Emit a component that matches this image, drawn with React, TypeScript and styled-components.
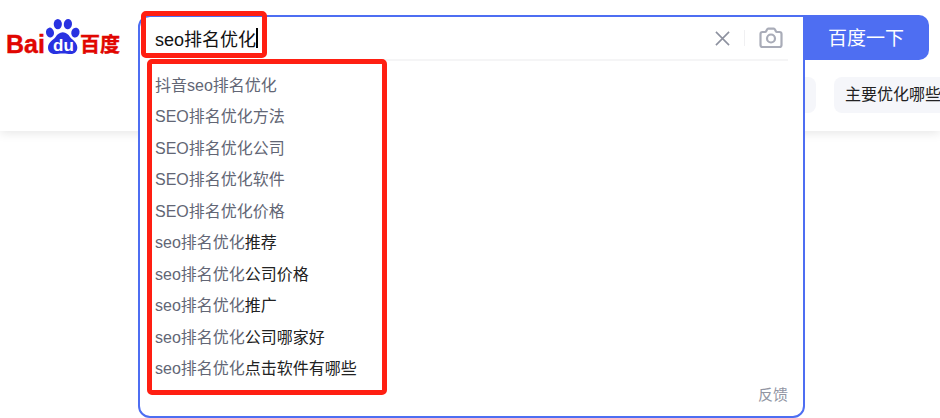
import React, { useState } from "react";
import styled, { createGlobalStyle } from "styled-components";

const blue = "#4e6ef2";

const GlobalStyle = createGlobalStyle`
  * { box-sizing: border-box; }
  body {
    margin: 0;
    background: #fff;
    font-family: "Liberation Sans", "Noto Sans CJK SC", sans-serif;
    font-size: 16px;
    color: #222;
  }
  button, input { font: inherit; }
`;

const Page = styled.div`
  min-height: 100vh;
`;

const Header = styled.header`
  display: flex;
  gap: 18px;
  padding: 15px 0 18px 6px;
  background: #fff;
  box-shadow: 0 2px 10px 0 rgba(0, 0, 0, 0.1);
`;

const LogoLink = styled.a`
  flex: none;
  display: block;
  height: 45px;
`;

const Main = styled.div`
  flex: 1;
  min-width: 0;
`;

const SearchForm = styled.form`
  display: flex;
  height: 45px;
  margin-right: 11px;
`;

const SearchArea = styled.div`
  position: relative;
  flex: 1;
  min-width: 0;
`;

const Panel = styled.div`
  position: absolute;
  z-index: 1;
  top: 0;
  left: 0;
  right: -2px;
  padding: 0 15px 11px;
  background: #fff;
  border: 2px solid ${blue};
  border-radius: 12px 0 12px 12px;
`;

const InputRow = styled.div`
  display: flex;
  align-items: center;
  height: 44px;
  border-bottom: 2px solid #f5f5f6;
`;

const SearchInput = styled.input`
  field-sizing: content;
  min-width: 20px;
  height: 28px;
  padding: 0;
  border: 0;
  outline: 0;
  background: none;
  font-size: 18px;
  color: #111;
  caret-color: transparent;
`;

const Caret = styled.span`
  width: 2px;
  height: 20px;
  background: #000;
`;

const Tools = styled.div`
  display: flex;
  align-items: center;
  gap: 14px;
  margin-left: auto;
  padding-right: 5px;
`;

const ToolButton = styled.button`
  display: flex;
  padding: 0;
  border: 0;
  background: none;
  cursor: pointer;
`;

const Separator = styled.span`
  width: 1px;
  height: 16px;
  background: #f0f0f2;
`;

const Suggestions = styled.ul`
  display: grid;
  grid-auto-rows: 1fr;
  height: 315px;
  margin: 9px 0 0;
  padding: 0;
  list-style: none;
`;

const Suggestion = styled.li`
  display: flex;
  align-items: center;
`;

const SuggestionLink = styled.a`
  line-height: 24px;
  color: #626675;
  text-decoration: none;
  white-space: nowrap;
`;

const Completion = styled.span`
  color: #222;
`;

const FeedbackRow = styled.div`
  display: flex;
  justify-content: flex-end;
`;

const FeedbackLink = styled.a`
  font-size: 15px;
  line-height: 20px;
  color: #9195a3;
  text-decoration: none;
`;

const SubmitButton = styled.button`
  flex: none;
  width: 126px;
  padding: 0 0 2px;
  border: 0;
  border-radius: 0 10px 10px 0;
  background: ${blue};
  color: #fff;
  font-size: 19px;
  cursor: pointer;
`;

const Chips = styled.nav`
  display: flex;
  gap: 18px;
  margin-top: 17px;
`;

const HiddenChip = styled.span`
  flex: 1;
  height: 36px;
  border-radius: 8px;
  background: #f5f6fa;
`;

const Chip = styled.a`
  flex: none;
  width: 106px;
  height: 36px;
  padding-left: 11px;
  overflow: hidden;
  border-radius: 8px 0 0 8px;
  background: #f5f6fa;
  color: #222;
  line-height: 36px;
  text-decoration: none;
  white-space: nowrap;
`;

const Marker = styled.div<{ $area: "query" | "list" }>`
  position: absolute;
  z-index: 2;
  pointer-events: none;
  border: 5px solid #ff1f12;
  border-radius: 5px;
  ${({ $area }) =>
    $area === "query"
      ? "left: 3px; top: -4px; width: 126px; height: 47px;"
      : "left: 9px; top: 44px; width: 240px; height: 336px;"}
`;

const Logo = () => (
  <svg width="114" height="45" viewBox="6 15 114 45" role="img" aria-label="Baidu 百度">
    <g fill="#e10601" fontWeight="700" stroke="#e10601" strokeWidth="0.4">
      <text x="6" y="53" fontSize="25" fontFamily="Liberation Sans, sans-serif">Bai</text>
      <text x="80" y="52" fontSize="20" fontFamily="Noto Sans CJK SC, sans-serif">百度</text>
    </g>
    <g fill="#2932e1">
      <ellipse cx="50" cy="32.6" rx="4" ry="5" transform="rotate(-10 50 32.6)" />
      <ellipse cx="57.8" cy="24.1" rx="4.1" ry="5.2" />
      <ellipse cx="67.9" cy="24.1" rx="4.1" ry="5.2" transform="rotate(6 67.9 24.1)" />
      <ellipse cx="75.4" cy="32.6" rx="4.1" ry="5" transform="rotate(14 75.4 32.6)" />
      <path d="M62.8 32.3c3.4 0 5.400 2.200 7.200 4.600 2.500 3.100 7.300 5.400 7.300 10.700 0 4-2.800 6.500-6.500 6.500-3 0-4.600-.7-8-.7s-5 .7-8 .7c-4 0-6.800-2.500-6.800-6.500 0-5.300 5.100-7.600 7.600-10.700 1.800-2.400 3.800-4.600 7.200-4.600Z" />
    </g>
    <text x="53" y="51" fontSize="17" fontWeight="700" fill="#fff" fontFamily="Liberation Sans, sans-serif">du</text>
  </svg>
);

const CloseIcon = () => (
  <svg width="15" height="15" viewBox="0 0 16 16" fill="none" stroke="#8d919f" strokeWidth="1.7" aria-hidden="true">
    <path d="M1 1l14 14M15 1L1 15" />
  </svg>
);

const CameraIcon = () => (
  <svg width="24" height="22" viewBox="0 0 24 22" fill="none" stroke="#a9acb8" strokeWidth="2.2" strokeLinejoin="round" aria-hidden="true">
    <path d="M3.500 5H6c.7 0 1-.3 1.300-.9l.5-1.200C8.100 2.300 8.500 1.600 9.200 1.600h5.600c.7 0 1.100.7 1.400 1.300l.5 1.200c.3.600.6.900 1.300.9h2.500c1.100 0 2 .9 2 2v11c0 1.200-.9 2-2 2h-17c-1.200 0-2-.8-2-2V7c0-1.100.8-2 2-2Z" />
    <circle cx="12" cy="11.500" r="4" />
  </svg>
);

const suggestions: { typed: string; rest?: string }[] = [
  { typed: "抖音seo排名优化" },
  { typed: "SEO排名优化方法" },
  { typed: "SEO排名优化公司" },
  { typed: "SEO排名优化软件" },
  { typed: "SEO排名优化价格" },
  { typed: "seo排名优化", rest: "推荐" },
  { typed: "seo排名优化", rest: "公司价格" },
  { typed: "seo排名优化", rest: "推广" },
  { typed: "seo排名优化", rest: "公司哪家好" },
  { typed: "seo排名优化", rest: "点击软件有哪些" },
];

export default function App() {
  const [query, setQuery] = useState("seo排名优化");

  return (
    <Page>
      <GlobalStyle />
      <Header>
        <LogoLink href="#">
          <Logo />
        </LogoLink>
        <Main>
          <SearchForm onSubmit={(e) => e.preventDefault()}>
            <SearchArea>
              <Panel>
                <InputRow>
                  <SearchInput
                    type="text"
                    aria-label="搜索"
                    autoComplete="off"
                    spellCheck={false}
                    value={query}
                    onChange={(e) => setQuery(e.target.value)}
                  />
                  <Caret />
                  <Tools>
                    <ToolButton type="button" aria-label="清空" onClick={() => setQuery("")}>
                      <CloseIcon />
                    </ToolButton>
                    <Separator />
                    <ToolButton type="button" aria-label="按图片搜索">
                      <CameraIcon />
                    </ToolButton>
                  </Tools>
                </InputRow>
                <Suggestions>
                  {suggestions.map(({ typed, rest }) => (
                    <Suggestion key={typed + (rest ?? "")}>
                      <SuggestionLink href="#">
                        {typed}
                        {rest && <Completion>{rest}</Completion>}
                      </SuggestionLink>
                    </Suggestion>
                  ))}
                </Suggestions>
                <FeedbackRow>
                  <FeedbackLink href="#">反馈</FeedbackLink>
                </FeedbackRow>
              </Panel>
              <Marker $area="query" />
              <Marker $area="list" />
            </SearchArea>
            <SubmitButton type="submit">百度一下</SubmitButton>
          </SearchForm>
          <Chips>
            <HiddenChip />
            <Chip href="#">主要优化哪些</Chip>
          </Chips>
        </Main>
      </Header>
    </Page>
  );
}
